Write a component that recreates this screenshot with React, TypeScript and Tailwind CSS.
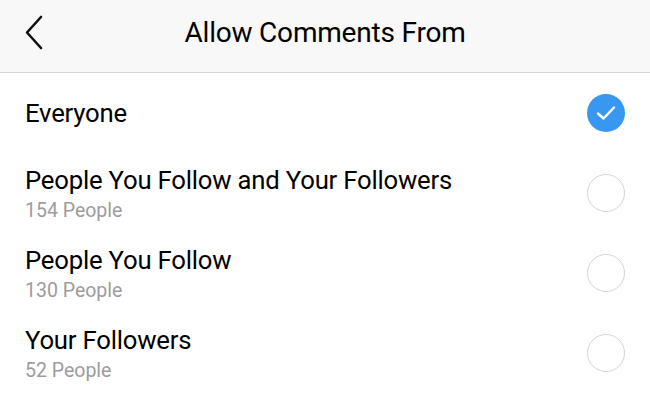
import React from "react";

const options = [
  { label: "Everyone", sub: null, checked: true },
  { label: "People You Follow and Your Followers", sub: "154 People", checked: false },
  { label: "People You Follow", sub: "130 People", checked: false },
  { label: "Your Followers", sub: "52 People", checked: false },
];

export default function App() {
  return (
    <main className="w-[650px] h-[400px] overflow-hidden bg-white text-black font-['Roboto',sans-serif]">
      <header className="relative h-[73px] bg-[#f8f8f8] border-b border-[#d6d6d6] flex items-center justify-center">
        <svg className="absolute left-[22px] top-[13px]" width="24" height="40" viewBox="0 0 24 40">
          <path d="M19 4 L5 19.5 L19 35" fill="none" stroke="#111" strokeWidth="2.6" strokeLinecap="round" strokeLinejoin="round" />
        </svg>
        <h1 className="text-[28px] font-normal tracking-[-0.2px] mb-[6px]">Allow Comments From</h1>
      </header>

      <ul>
        {options.map((o) => (
          <li key={o.label} className="h-[80px] pl-[25px] pr-[25px] flex items-center justify-between">
            <div className={o.sub ? "flex flex-col mt-[2px]" : "flex flex-col"}>
              <span className="text-[25.7px] leading-[30px] tracking-[-0.2px]">{o.label}</span>
              {o.sub && <span className="text-[19.5px] leading-[24px] mt-[4px] text-[#9c9c9c]">{o.sub}</span>}
            </div>
            {o.checked ? (
              <span className="w-[38px] h-[38px] rounded-full bg-[#3897f0] flex items-center justify-center">
                <svg width="20" height="16" viewBox="0 0 20 16">
                  <path d="M2 8.5 L7.5 13.5 L18 2.5" fill="none" stroke="white" strokeWidth="2.4" strokeLinecap="round" strokeLinejoin="round" />
                </svg>
              </span>
            ) : (
              <span className="w-[38px] h-[38px] rounded-full border-[1.5px] border-[#d4d4d4]" />
            )}
          </li>
        ))}
      </ul>
    </main>
  );
}
